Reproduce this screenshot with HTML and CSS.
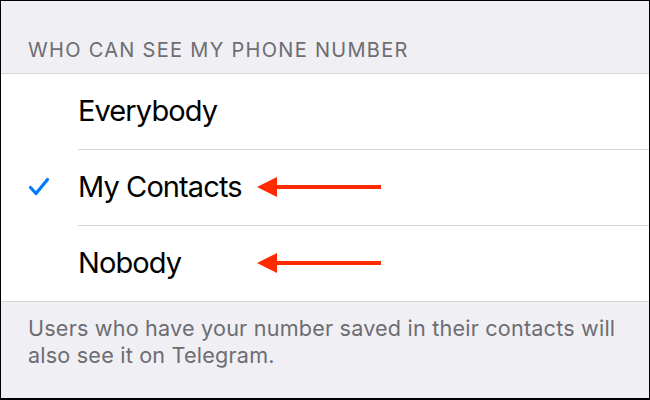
FILE: index.html
```html
<!DOCTYPE html>
<html lang="en">
<head>
    <meta charset="UTF-8">
    <meta name="viewport" content="width=device-width, initial-scale=1.0">
    <title>Phone Number Privacy</title>
    <link rel="stylesheet" href="styles.css">
</head>
<body>
    <div class="screen">
        <div class="section-header">WHO CAN SEE MY PHONE NUMBER</div>

        <ul class="options">
            <li class="option">
                <span class="mark"></span>
                <span class="label">Everybody</span>
            </li>
            <li class="option selected">
                <span class="mark">
                    <!-- checkmark for the chosen option -->
                    <svg width="22" height="20" viewBox="0 0 22 20">
                        <polyline points="2.5,10.5 8,16.5 19.5,2.5" fill="none" stroke="#007aff" stroke-width="3.2" stroke-linecap="round" stroke-linejoin="round"/>
                    </svg>
                </span>
                <span class="label">My Contacts</span>
                <svg class="pointer" width="124" height="22" viewBox="0 0 124 22">
                    <polygon points="0,11 20,1 20,21" fill="#ff2a00"/>
                    <rect x="18" y="9" width="106" height="4" fill="#ff2a00"/>
                </svg>
            </li>
            <li class="option">
                <span class="mark"></span>
                <span class="label">Nobody</span>
                <svg class="pointer" width="124" height="22" viewBox="0 0 124 22">
                    <polygon points="0,11 20,1 20,21" fill="#ff2a00"/>
                    <rect x="18" y="9" width="106" height="4" fill="#ff2a00"/>
                </svg>
            </li>
        </ul>

        <p class="section-footer">Users who have your number saved in their contacts will also see it on Telegram.</p>
    </div>
</body>
</html>
```

FILE: styles.css
```css
body {
    margin: 0;
    font-family: Inter, "Liberation Sans", sans-serif;
}

.screen {
    width: 650px;
    height: 400px;
    box-sizing: border-box;
    border: 1px solid #000;
    border-bottom-width: 2px;
    background-color: #efeff4;
}

.section-header {
    padding: 37px 27px 11px;
    font-size: 20px;
    line-height: 24px;
    letter-spacing: 1.3px;
    color: #6d6d72;
}

.options {
    list-style: none;
    margin: 0;
    padding: 0;
    background: #fff;
    border-top: 1px solid #d6d6da;
    border-bottom: 1px solid #d6d6da;
}

.option {
    position: relative;
    display: flex;
}

.mark {
    width: 77px;
    display: flex;
    align-items: center;
    padding-left: 27px;
    padding-bottom: 2px;
    box-sizing: border-box;
}

.label {
    flex: 1;
    height: 76px;
    display: flex;
    align-items: center;
    padding-bottom: 3px;
    box-sizing: border-box;
    font-size: 29px;
    letter-spacing: -0.9px;
    color: #000;
    border-bottom: 1px solid #d6d6da;
}

.option:last-child .label {
    border-bottom: none;
    height: 75px;
}

/* red annotation arrows sit over the rows */
.pointer {
    position: absolute;
    left: 256px;
    top: 26px;
}

.section-footer {
    margin: 0;
    padding: 13px 27px 0;
    font-size: 21.6px;
    line-height: 27px;
    letter-spacing: 0.2px;
    color: #6d6d72;
}
```
